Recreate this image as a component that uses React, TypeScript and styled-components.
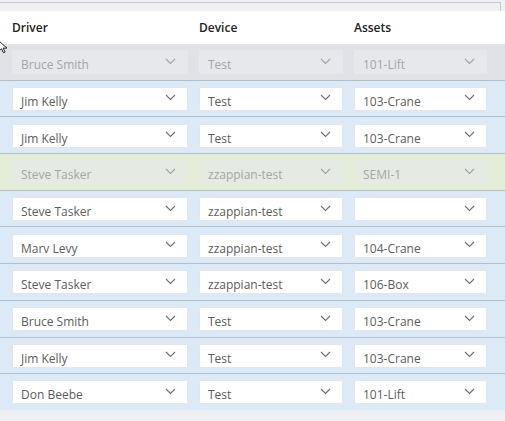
import styled, { createGlobalStyle } from "styled-components";

const GlobalStyle = createGlobalStyle`
  html, body {
    margin: 0;
    padding: 0;
    background: #f0eff4;
    font-family: "Open Sans", "Liberation Sans", sans-serif;
  }
`;

type Tone = "blue" | "gray" | "green";

interface Assignment {
  driver: string;
  device: string;
  asset: string;
  tone: Tone;
}

const rows: Assignment[] = [
  { driver: "Bruce Smith", device: "Test", asset: "101-Lift", tone: "gray" },
  { driver: "Jim Kelly", device: "Test", asset: "103-Crane", tone: "blue" },
  { driver: "Jim Kelly", device: "Test", asset: "103-Crane", tone: "blue" },
  { driver: "Steve Tasker", device: "zzappian-test", asset: "SEMI-1", tone: "green" },
  { driver: "Steve Tasker", device: "zzappian-test", asset: "", tone: "blue" },
  { driver: "Marv Levy", device: "zzappian-test", asset: "104-Crane", tone: "blue" },
  { driver: "Steve Tasker", device: "zzappian-test", asset: "106-Box", tone: "blue" },
  { driver: "Bruce Smith", device: "Test", asset: "103-Crane", tone: "blue" },
  { driver: "Jim Kelly", device: "Test", asset: "103-Crane", tone: "blue" },
  { driver: "Don Beebe", device: "Test", asset: "101-Lift", tone: "blue" },
];

const rowBg: Record<Tone, string> = {
  blue: "#dce9f7",
  gray: "#e1e2e7",
  green: "#e3edd8",
};

const selectBg: Record<Tone, string> = {
  blue: "#ffffff",
  gray: "#e7e8ec",
  green: "#e5ebe3",
};

const Page = styled.div`
  position: relative;
  width: 505px;
  height: 421px;
  overflow: hidden;
  background: #f0eff4;
`;

const TopBar = styled.div`
  height: 8px;
  margin-top: 2px;
  margin-right: 4px;
  border-top: 1px solid #c9c8d0;
  border-right: 1px solid #c9c8d0;
  background: #f0eff4;
`;

const Grid = styled.div`
  display: grid;
  grid-template-columns: 176px 144px 133px;
  column-gap: 11px;
  padding-left: 12px;
`;

const Header = styled(Grid)`
  height: 33px;
  align-items: center;
  background: #ffffff;
`;

const HeadCell = styled.div`
  font-size: 12px;
  font-weight: 600;
  color: #222;
  padding-bottom: 1px;
`;

const Row = styled(Grid)<{ $tone: Tone; $last?: boolean }>`
  background: ${(p) => rowBg[p.$tone]};
  padding-top: 6.3px;
  padding-bottom: 5.4px;
  border-bottom: ${(p) => (p.$last ? "none" : "1px solid #b7bdc6")};
`;

const Select = styled.div<{ $tone: Tone; $disabled?: boolean }>`
  height: 24px;
  box-sizing: border-box;
  display: flex;
  align-items: center;
  justify-content: space-between;
  padding: 0 11px 0 8px;
  background: ${(p) => selectBg[p.$tone]};
  border: 1px solid ${(p) => (p.$disabled ? "transparent" : "#e2e6ec")};
  border-radius: 1px;
  font-size: 12px;
  color: ${(p) => (p.$disabled ? "#a4a5a8" : "#5c5c5c")};
  span {
    padding-top: 5px;
  }
  svg {
    flex: none;
    margin-top: -2px;
  }
`;

const Cursor = styled.svg`
  position: absolute;
  left: -2px;
  top: 40px;
`;

const Chevron = ({ muted }: { muted?: boolean }) => (
  <svg width="11" height="7" viewBox="0 0 11 7">
    <path d="M1 1l4.5 4.5L10 1" fill="none" stroke={muted ? "#a0a1a6" : "#707070"} strokeWidth="1.1" />
  </svg>
);

const Field = ({ value, tone }: { value: string; tone: Tone }) => {
  const disabled = tone !== "blue";
  return (
    <Select $tone={tone} $disabled={disabled}>
      <span>{value}</span>
      <Chevron muted={disabled} />
    </Select>
  );
};

export default function App() {
  return (
    <>
      <GlobalStyle />
      <Page>
        <TopBar />
        <Header>
          <HeadCell>Driver</HeadCell>
          <HeadCell>Device</HeadCell>
          <HeadCell>Assets</HeadCell>
        </Header>
        {rows.map((r, i) => (
          <Row key={i} $tone={r.tone} $last={i === rows.length - 1}>
            <Field value={r.driver} tone={r.tone} />
            <Field value={r.device} tone={r.tone} />
            <Field value={r.asset} tone={r.tone} />
          </Row>
        ))}
        <Cursor width="12" height="14" viewBox="0 0 12 14">
          <path d="M1 1v10l2.5-2.2 2 4 1.6-.8-2-3.9H9z" fill="#fff" stroke="#222" strokeWidth="1" strokeLinejoin="round" />
        </Cursor>
      </Page>
    </>
  );
}
